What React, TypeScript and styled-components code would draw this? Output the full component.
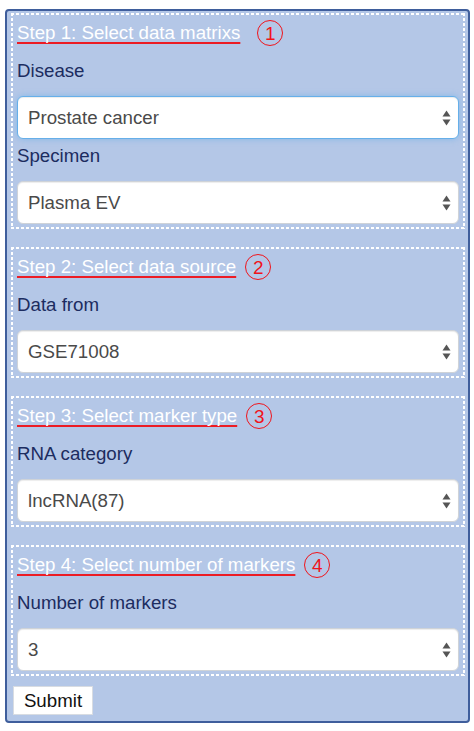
import React, { FC } from "react";
import styled, { createGlobalStyle } from "styled-components";

const GlobalStyle = createGlobalStyle`
  html, body {
    margin: 0;
    padding: 0;
    background: #ffffff;
  }
  body {
    font-family: "Liberation Sans", Arial, Helvetica, sans-serif;
  }
`;

const ArrowIcon: FC = () => (
  <svg width="9" height="17" viewBox="0 0 9 17" aria-hidden="true">
    <path d="M4.5 1 L8.5 7 L0.5 7 Z" fill="#555" />
    <path d="M0.5 10 L8.5 10 L4.5 16 Z" fill="#555" />
  </svg>
);

type SelectFieldProps = {
  label: string;
  value: string;
  focused?: boolean;
  first?: boolean;
};

const SelectField: FC<SelectFieldProps> = ({ label, value, focused, first }) => (
  <>
    <Label $first={first}>{label}</Label>
    <SelectWrap>
      <Select $focused={focused} defaultValue={value}>
        <option value={value}>{value}</option>
      </Select>
      <Arrow>
        <ArrowIcon />
      </Arrow>
    </SelectWrap>
  </>
);

type StepProps = {
  title: string;
  num: string;
  gap?: number;
  children: React.ReactNode;
};

const Step: FC<StepProps> = ({ title, num, gap = 9, children }) => (
  <Section>
    <Heading>
      <Title>{title}</Title>
      <Circle $gap={gap}>{num}</Circle>
    </Heading>
    {children}
  </Section>
);

const App: FC = () => {
  return (
    <>
      <GlobalStyle />
      <Panel>
        <Step title="Step 1: Select data matrixs" num="1" gap={17}>
          <SelectField label="Disease" value="Prostate cancer" focused first />
          <SelectField label="Specimen" value="Plasma EV" />
        </Step>
        <Step title="Step 2: Select data source" num="2">
          <SelectField label="Data from" value="GSE71008" first />
        </Step>
        <Step title="Step 3: Select marker type" num="3">
          <SelectField label="RNA category" value="lncRNA(87)" first />
        </Step>
        <Step title="Step 4: Select number of markers" num="4">
          <SelectField label="Number of markers" value="3" first />
        </Step>
        <SubmitButton type="button">Submit</SubmitButton>
      </Panel>
    </>
  );
};

const Panel = styled.div`
  box-sizing: border-box;
  width: 465px;
  margin: 9px 0 0 5px;
  padding: 2px 3px 6px 4px;
  border: 2px solid #3f5e9c;
  border-radius: 4px;
  background-color: #b4c7e7;
  display: flex;
  flex-direction: column;
  gap: 18px;
  font-size: 18.7px;
`;

const dashH = "repeating-linear-gradient(90deg, #fff 0 3px, transparent 3px 5px)";
const dashV = "repeating-linear-gradient(180deg, #fff 0 3px, transparent 3px 5px)";

const Section = styled.div`
  display: flex;
  flex-direction: column;
  padding: 0 4px 3px;
  border: 2px solid transparent;
  background:
    ${dashH} top left / 100% 2px no-repeat,
    ${dashH} bottom left / 100% 2px no-repeat,
    ${dashV} top left / 2px 100% no-repeat,
    ${dashV} top right / 2px 100% no-repeat;
  background-origin: border-box;
`;

const Heading = styled.div`
  display: flex;
  align-items: center;
  height: 26px;
  margin: 5px 0 12px;
`;

const Title = styled.span`
  color: #ffffff;
  font-size: 18.7px;
  line-height: 26px;
  text-decoration: underline;
  text-decoration-color: #ec1c24;
  text-decoration-thickness: 2px;
  text-decoration-skip-ink: none;
  text-underline-offset: 3px;
`;

const Circle = styled.span<{ $gap: number }>`
  box-sizing: border-box;
  display: inline-flex;
  align-items: center;
  justify-content: center;
  width: 26px;
  height: 26px;
  margin-left: ${(p) => p.$gap}px;
  border: 1px solid #f0141b;
  border-radius: 50%;
  color: #f0141b;
  font-size: 19px;
  line-height: 1;
`;

const Label = styled.label<{ $first?: boolean }>`
  display: block;
  margin: ${(p) => (p.$first ? "0" : "4px")} 0 12px;
  color: #1c2c60;
  font-size: 18.7px;
  line-height: 26px;
`;

const SelectWrap = styled.div`
  position: relative;
`;

const Select = styled.select<{ $focused?: boolean }>`
  box-sizing: border-box;
  display: block;
  width: 100%;
  height: 43px;
  padding: 0 30px 0 10px;
  appearance: none;
  -webkit-appearance: none;
  background: #ffffff;
  border: 1px solid ${(p) => (p.$focused ? "#66afe9" : "#cfd3d8")};
  border-radius: 6px;
  box-shadow: ${(p) =>
    p.$focused
      ? "inset 0 1px 1px rgba(0,0,0,.075), 0 0 6px rgba(102,175,233,.6)"
      : "inset 0 1px 1px rgba(0,0,0,.075)"};
  color: #4a4a4a;
  font-family: "Liberation Sans", Arial, Helvetica, sans-serif;
  font-size: 18.7px;
  outline: none;
`;

const Arrow = styled.span`
  position: absolute;
  top: 50%;
  right: 8px;
  transform: translateY(-50%);
  display: flex;
  pointer-events: none;
`;

const SubmitButton = styled.button`
  box-sizing: border-box;
  width: 80px;
  height: 29px;
  margin: -8px 0 0 2px;
  padding: 0;
  background: #ffffff;
  border: 1px solid #d8dce2;
  border-radius: 0;
  color: #111111;
  font-family: "Liberation Sans", Arial, Helvetica, sans-serif;
  font-size: 18.7px;
`;

export default App;
